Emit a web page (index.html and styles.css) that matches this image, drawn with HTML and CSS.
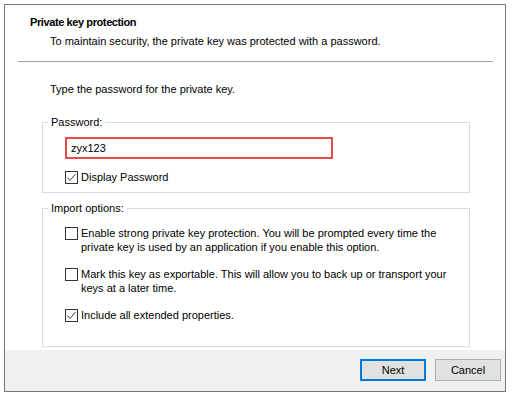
FILE: index.html
```html
<!DOCTYPE html>
<html>
<head>
<meta charset="utf-8">
<link rel="stylesheet" href="styles.css">
</head>
<body>
<div class="window">
  <div class="header">
    <div class="title">Private key protection</div>
    <div class="subtitle">To maintain security, the private key was protected with a password.</div>
  </div>
  <div class="sep"></div>
  <div class="content">
    <p class="prompt">Type the password for the private key.</p>
    <fieldset class="group group-password">
      <legend>Password:</legend>
      <div class="body body-password">
        <div class="field">zyx123</div>
        <label class="check check-display">
          <svg class="box" width="13" height="13" viewBox="0 0 13 13"><rect x="0.5" y="0.5" width="12" height="12" fill="#fff" stroke="#333"/><path d="M2.5 6.5 L5 9.5 L10.5 3" fill="none" stroke="#444" stroke-width="1"/></svg>
          <span>Display Password</span>
        </label>
      </div>
    </fieldset>
    <fieldset class="group group-import">
      <legend>Import options:</legend>
      <div class="body body-import">
        <label class="check">
          <svg class="box" width="13" height="13" viewBox="0 0 13 13"><rect x="0.5" y="0.5" width="12" height="12" fill="#fff" stroke="#333"/></svg>
          <span class="text">Enable strong private key protection. You will be prompted every time the private key is used by an application if you enable this option.</span>
        </label>
        <label class="check">
          <svg class="box" width="13" height="13" viewBox="0 0 13 13"><rect x="0.5" y="0.5" width="12" height="12" fill="#fff" stroke="#333"/></svg>
          <span class="text">Mark this key as exportable. This will allow you to back up or transport your keys at a later time.</span>
        </label>
        <label class="check">
          <svg class="box" width="13" height="13" viewBox="0 0 13 13"><rect x="0.5" y="0.5" width="12" height="12" fill="#fff" stroke="#333"/><path d="M2.5 6.5 L5 9.5 L10.5 3" fill="none" stroke="#444" stroke-width="1"/></svg>
          <span class="text">Include all extended properties.</span>
        </label>
      </div>
    </fieldset>
  </div>
  <div class="footer">
    <button class="btn btn-default">Next</button>
    <button class="btn">Cancel</button>
  </div>
</div>
</body>
</html>
```
FILE: styles.css
```css
html, body {
  margin: 0;
  padding: 0;
  background: #fff;
}
body {
  font-family: "Liberation Sans", Arial, sans-serif;
  font-size: 11px;
  line-height: 14px;
  color: #000;
}
.window {
  margin: 4px;
  width: 500px;
  height: 386px;
  border: 1px solid #777;
  display: flex;
  flex-direction: column;
  background: #fff;
}
.header {
  padding: 10px 0 0 25px;
}
.title {
  font-weight: bold;
  letter-spacing: -0.4px;
}
.subtitle {
  margin: 5px 0 0 20px;
}
.sep {
  margin: 13px 12px 0 13px;
  height: 1px;
  background: #a0a0a0;
}
.content {
  padding-left: 37px;
}
.prompt {
  margin: 20px 0 0 8px;
}
.group {
  margin: 0;
  padding: 0;
  width: 428px;
  box-sizing: border-box;
  border: 1px solid #dcdcdc;
  min-width: 0;
}
.group legend {
  margin-left: 5px;
  padding: 0 3px;
  line-height: 14px;
}
.group-password {
  margin-top: 19px;
}
.group-import {
  margin-top: 8px;
}
.body-password {
  padding: 8px 0 8px 22px;
}
.body-import {
  padding: 11px 0 24px 22px;
  display: flex;
  flex-direction: column;
  gap: 13px;
}
.field {
  width: 268px;
  height: 22px;
  box-sizing: border-box;
  border: 2px solid #e84a4a;
  padding-left: 4px;
  line-height: 18px;
}
.check {
  display: flex;
  align-items: flex-start;
  gap: 3px;
}
.check .box {
  flex: none;
  margin-top: 1px;
}
.check-display {
  margin-top: 11px;
}
.check .text {
  width: 372px;
}
.footer {
  margin-top: auto;
  height: 41px;
  box-sizing: border-box;
  background: #f0f0f0;
  display: flex;
  justify-content: flex-end;
  align-items: flex-start;
  gap: 9px;
  padding: 9px 4px 0 0;
}
.btn {
  width: 66px;
  height: 22px;
  box-sizing: border-box;
  border: 1px solid #adadad;
  background: #e1e1e1;
  font-family: "Liberation Sans", Arial, sans-serif;
  font-size: 11px;
  color: #000;
  padding: 0;
  margin: 0;
}
.btn-default {
  border: 2px solid #0078d7;
}
```
